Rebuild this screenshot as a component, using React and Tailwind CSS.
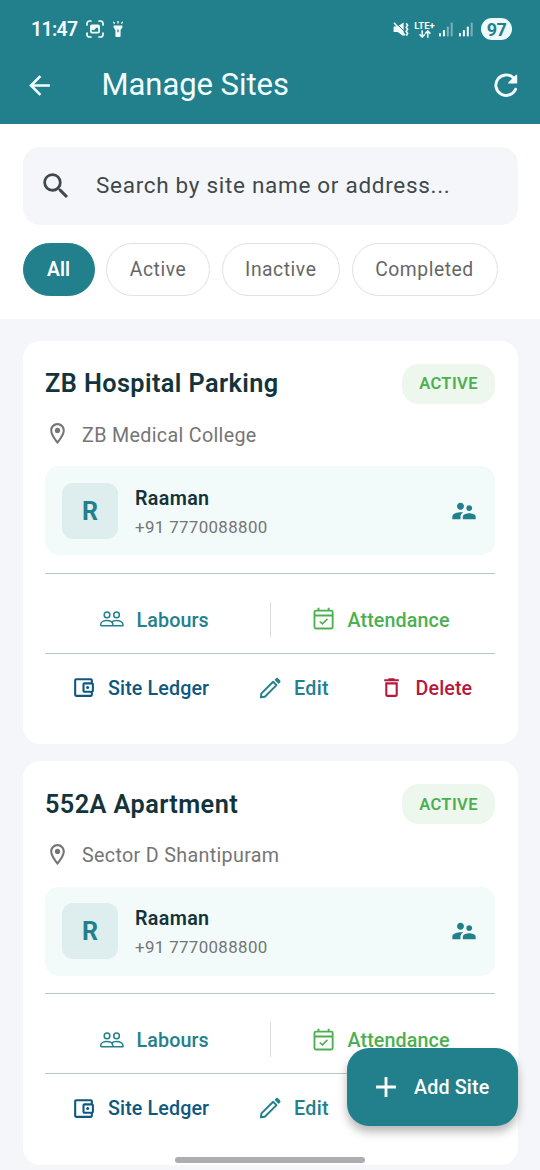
/**
 * App.jsx — Manage Sites screen
 *
 * Header, search + status filters, list of site cards and the "Add Site" button.
 */

import {
  MdAdd,
  MdArrowBack,
  MdDeleteOutline,
  MdOutlineAccountBalanceWallet,
  MdOutlineLocationOn,
  MdSearch,
  MdSupervisorAccount,
} from 'react-icons/md'

const filters = [
  { label: 'All', className: 'w-[72px] bg-[#22808d] border-[#22808d] text-white font-semibold tracking-[0px]' },
  { label: 'Active', className: 'w-[104px] border-[#e0e0e0] text-[#666666] tracking-[0.55px]' },
  { label: 'Inactive', className: 'w-[118.5px] border-[#e0e0e0] text-[#666666] tracking-[0.55px]' },
  { label: 'Completed', className: 'w-[146px] border-[#e0e0e0] text-[#666666] tracking-[0.55px]' },
]

const sites = [
  { name: 'ZB Hospital Parking', address: 'ZB Medical College', owner: 'Raaman', phone: '+91 7770088800' },
  { name: '552A Apartment', address: 'Sector D Shantipuram', owner: 'Raaman', phone: '+91 7770088800' },
]

function CalendarCheckIcon({ className }) {
  return (
    <svg viewBox="0 0 24 24" fill="none" stroke="currentColor" className={className}>
      <rect x="3.2" y="4.2" width="16.8" height="16.6" rx="1.4" strokeWidth="1.7" />
      <path d="M3.2 8.7h16.8M6.9 1.6v2.6M16.3 1.6v2.6" strokeWidth="1.8" />
      <path d="M8 14.3l2.5 2.2 4.7-4.6" strokeWidth="1.4" />
    </svg>
  )
}

function PeopleIcon({ className }) {
  return (
    <svg viewBox="0 0 24 24" fill="none" stroke="currentColor" strokeWidth="1.4" strokeLinejoin="round" className={className}>
      <circle cx="7.4" cy="8.2" r="2.6" />
      <circle cx="16.2" cy="8.2" r="2.6" />
      <path d="M1.6 18.2v-1.4c0-2 2.6-3.4 5.6-3.4 2.4 0 4.6.9 5.4 2.4" />
      <path d="M11.4 14.9c1.2-1 3-1.5 4.9-1.5 3 0 5.8 1.4 5.8 3.4v1.4H1.6" />
      <path d="M12.2 15.4c.5.5.7 1.2.7 2.8" />
    </svg>
  )
}

function PencilIcon({ className }) {
  return (
    <svg viewBox="0 0 24 24" fill="none" stroke="currentColor" strokeWidth="1.8" strokeLinejoin="round" className={className}>
      <path d="M3.6 20.6l.5-3.6L14.9 6.2l3.1 3.1L7.2 20.1z" />
      <path d="M17 4.4l.8-.8a1 1 0 0 1 1.4 0l1.6 1.6a1 1 0 0 1 0 1.4l-.8.8z" fill="currentColor" strokeWidth="1.2" />
    </svg>
  )
}

function SignalIcon({ strong }) {
  return (
    <svg viewBox="0 0 14 15" fill="currentColor" className="h-[15px] w-[14px]">
      <rect x="0" y="11" width="2" height="3.5" rx="0.8" />
      <rect x="3.9" y="8" width="2" height="6.5" rx="0.8" />
      <rect x="7.8" y="4.5" width="2" height="10" rx="0.8" opacity={strong ? 1 : 0.45} />
      <rect x="11.7" y="0.5" width="2" height="14" rx="0.8" opacity="0.4" />
    </svg>
  )
}

function StatusBar() {
  return (
    <div className="flex h-[58px] items-center pl-[31px] pr-[28px]">
      <span className="w-[46px] whitespace-nowrap pt-px text-[19.5px] font-semibold tracking-[-0.7px]">11:47</span>

      {/* Screen capture */}
      <svg viewBox="0 0 18 18" fill="none" stroke="currentColor" strokeWidth="1.7" className="ml-[9px] h-[18px] w-[18px]">
        <path d="M1 5V3.6A2.6 2.6 0 0 1 3.6 1H5M13 1h1.4A2.6 2.6 0 0 1 17 3.6V5M17 13v1.4a2.6 2.6 0 0 1-2.6 2.6H13M5 17H3.6A2.6 2.6 0 0 1 1 14.4V13" strokeLinecap="round" />
        <rect x="4.9" y="5.4" width="8.2" height="7.2" rx="1" />
        <path d="M5 5.5h8v3.2L10.5 7.6 8 10.2 5 9.6z" fill="currentColor" stroke="none" />
      </svg>

      {/* Flashlight */}
      <svg viewBox="0 0 12 18" fill="currentColor" className="ml-[8px] h-[18px] w-[12px]">
        <path d="M1.6 5.4h8.8v2.2L8.6 10v6a1 1 0 0 1-1 1H4.4a1 1 0 0 1-1-1v-6L1.6 7.6z" />
        <path d="M6 1v2.4M1.5 1.7l1 2M10.5 1.7l-1 2" stroke="currentColor" strokeWidth="1.3" />
        <path d="M6 9.6v2.6" stroke="#22808d" strokeWidth="1.3" />
      </svg>

      <div className="ml-auto flex items-center">
        {/* Muted, vibrate */}
        <svg viewBox="0 0 16 17" fill="currentColor" className="h-[17px] w-[16px]">
          <path d="M.6 5.6h4L10.6 1.4v13.8l-6-4.2h-4z" />
          <path d="M3.4 2.4l8 8" stroke="#22808d" strokeWidth="1" />
          <path d="M1 1.8l11 12.4" stroke="currentColor" strokeWidth="1.6" />
          <path d="M13.2 2.2l1.4 2-1.4 2 1.4 2-1.4 2 1.4 2-1.2 2.4" fill="none" stroke="currentColor" strokeWidth="1.6" />
        </svg>

        {/* Network type */}
        <div className="ml-[5px] flex w-[21px] flex-col items-center">
          <span className="text-[9.5px] font-bold leading-[9px]">LTE+</span>
          <svg viewBox="0 0 12 8" fill="none" stroke="currentColor" strokeWidth="1.5" className="h-[8px] w-[12px]">
            <path d="M3.2.3v6.5M.6 4.4l2.6 2.6 2.6-2.6M8.8 7.7V1.2M6.2 3.6L8.8 1l2.6 2.6" />
          </svg>
        </div>

        <div className="ml-[4px]"><SignalIcon /></div>
        <div className="ml-[6px]"><SignalIcon strong /></div>

        <span className="ml-[8px] flex h-[22px] w-[31px] items-center justify-center rounded-full bg-[#eefafb] text-[18px] font-bold tracking-[-0.5px] text-[#22808d]">
          97
        </span>
      </div>
    </div>
  )
}

function Header() {
  return (
    <header className="h-[124px] flex-shrink-0 bg-[#22808d] text-[#f3fdfe]">
      <StatusBar />
      <div className="flex h-[54px] items-center pl-[24px] pr-[20px]">
        <MdArrowBack className="h-[31px] w-[31px]" />
        <h1 className="ml-[46.5px] pb-px text-[31px] leading-none tracking-[-0.05px]">Manage Sites</h1>
        <svg viewBox="0 0 24 24" fill="none" stroke="currentColor" className="ml-auto h-[28px] w-[28px]">
          <path d="M20.2 15.6A8.8 8.8 0 1 1 18.4 6" strokeWidth="2.5" strokeLinecap="round" />
          <path d="M21 3.6v6.6h-6.6z" fill="currentColor" strokeWidth="1.2" strokeLinejoin="round" />
        </svg>
      </div>
    </header>
  )
}

function SiteCard({ name, address, owner, phone }) {
  return (
    <article className="h-[403.5px] flex-shrink-0 rounded-[17px] bg-white px-[22.5px] pt-[23px]">
      {/* Name + status */}
      <div className="flex h-[40px] items-center justify-between">
        <h2 className="pt-px text-[25.3px] font-semibold tracking-[0.41px] text-[#13343b]">{name}</h2>
        <span className="flex h-[40px] w-[93px] items-center justify-center rounded-[17px] bg-[#edf7ed] pt-[2px] text-[16.5px] font-semibold tracking-[0.4px] text-[#4caf50]">
          ACTIVE
        </span>
      </div>

      {/* Address */}
      <div className="mt-[16px] flex h-[28px] items-center text-[#757575]">
        <MdOutlineLocationOn className="h-[25px] w-[25px]" />
        <span className="ml-[12px] pt-[4px] text-[19.7px] tracking-[0.33px]">{address}</span>
      </div>

      {/* Contact */}
      <div className="mt-[18.5px] flex h-[89px] items-center rounded-[14px] bg-[#f3fafa] px-[17px]">
        <div className="flex h-[56px] w-[56px] items-center justify-center rounded-[11px] bg-[#deeded] pt-[2px] text-[25px] font-bold text-[#22808d]">
          R
        </div>
        <div className="ml-[17px] pt-[3px]">
          <p className="text-[19.7px] font-semibold leading-[29px] tracking-[0.35px] text-[#13343b]">{owner}</p>
          <p className="text-[16.9px] leading-[28px] tracking-[0.35px] text-[#757575]">{phone}</p>
        </div>
        <MdSupervisorAccount className="ml-auto h-[28px] w-[28px] text-[#22808d]" />
      </div>

      {/* Actions */}
      <div className="mt-[17.7px] flex h-[81px] items-center border-y-[1.4px] border-[#b5c9cb] pt-[12px] text-[19.7px] font-medium tracking-[0.12px]">
        <button className="flex w-[224.5px] items-center pl-[54px] text-[#22808d]">
          <PeopleIcon className="h-[26px] w-[26px]" />
          <span className="ml-[11.5px] pt-[3px]">Labours</span>
        </button>
        <div className="h-[35px] w-[1.4px] bg-[#d9dddf]" />
        <button className="flex items-center pl-[40.1px] text-[#4caf50]">
          <CalendarCheckIcon className="h-[26px] w-[26px]" />
          <span className="ml-[10.5px] pt-[3px]">Attendance</span>
        </button>
      </div>
      <div className="flex h-[68px] items-center text-[19.7px] font-medium tracking-[0.12px]">
        <button className="flex w-[212px] items-center pl-[26px] text-[#0e5880]">
          <MdOutlineAccountBalanceWallet className="h-[25px] w-[25px]" />
          <span className="ml-[12px] whitespace-nowrap pt-[2px]">Site Ledger</span>
        </button>
        <button className="flex w-[122px] items-center text-[#22808d]">
          <PencilIcon className="h-[26px] w-[26px]" />
          <span className="ml-[11px] pt-[2px] tracking-[0.3px]">Edit</span>
        </button>
        <button className="flex items-center text-[#b5193b]">
          <MdDeleteOutline className="h-[25px] w-[25px]" />
          <span className="ml-[11.5px] pt-[2px]">Delete</span>
        </button>
      </div>
    </article>
  )
}

export default function App() {
  return (
    <div className="relative flex h-[1170px] w-[540px] flex-col overflow-hidden bg-[#f5f6fa] font-['Roboto',sans-serif]">
      <Header />

      {/* Search + filters */}
      <section className="h-[194.5px] flex-shrink-0 bg-white px-[22.5px] pt-[23px]">
        <div className="flex h-[78px] items-center rounded-[17px] bg-[#f5f6fa] pl-[16px] text-[#40484b]">
          <MdSearch className="h-[34px] w-[34px]" />
          <span className="ml-[23.5px] text-[22.5px] tracking-[0.7px]">Search by site name or address...</span>
        </div>
        <div className="mt-[17.5px] flex gap-[11.5px] text-[19.3px]">
          {filters.map((filter) => (
            <button
              key={filter.label}
              className={`flex h-[53.5px] flex-shrink-0 items-center justify-center rounded-full border-[1.4px] pt-[2px] ${filter.className}`}
            >
              {filter.label}
            </button>
          ))}
        </div>
      </section>

      {/* Site list */}
      <main className="flex flex-col gap-[17px] px-[22.5px] pt-[22px]">
        {sites.map((site) => (
          <SiteCard key={site.name} {...site} />
        ))}
      </main>

      {/* Floating button */}
      <button className="absolute bottom-[44px] right-[22.5px] flex h-[78px] w-[171px] items-center rounded-[22px] bg-[#22808d] pl-[22px] text-[19.7px] font-medium tracking-[0.15px] text-white shadow-[0_6px_10px_rgba(0,0,0,0.28)]">
        <MdAdd className="h-[34px] w-[34px]" />
        <span className="ml-[11.5px] whitespace-nowrap pt-[2px]">Add Site</span>
      </button>

      {/* Gesture handle */}
      <div className="absolute bottom-[7px] left-[175px] h-[6px] w-[190px] rounded-full bg-[#adadaf]" />
    </div>
  )
}
